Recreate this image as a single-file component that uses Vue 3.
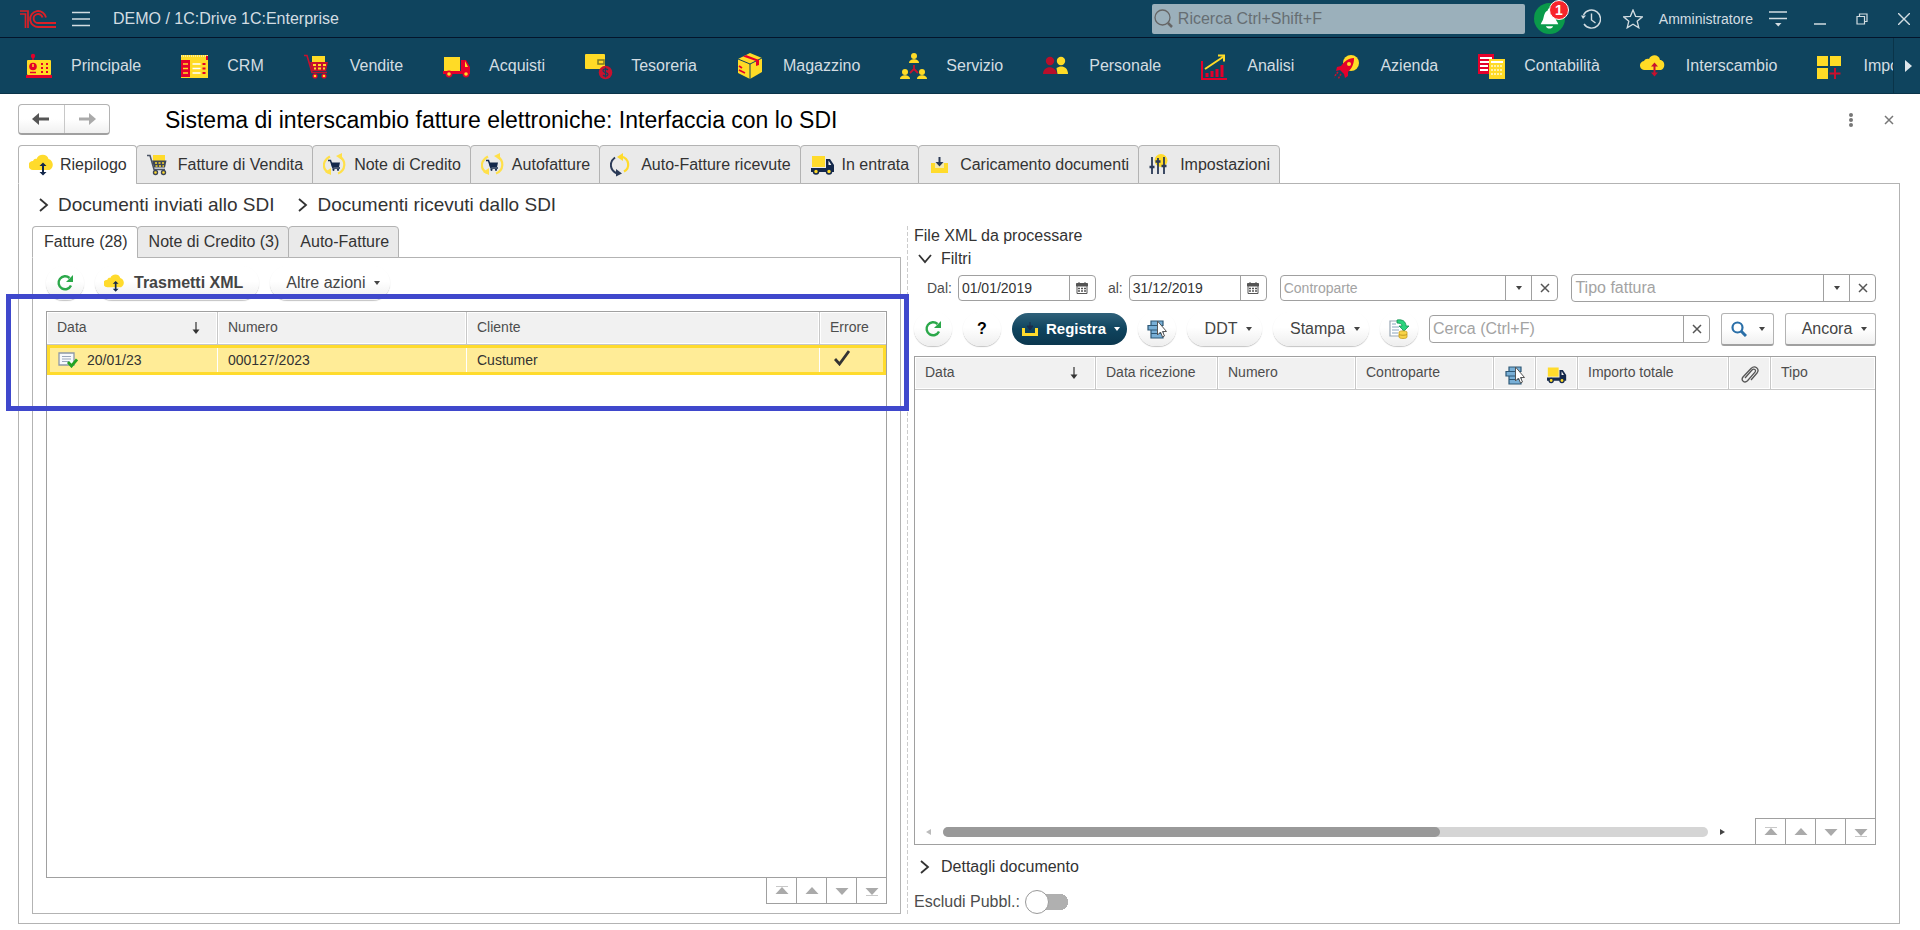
<script setup>
import { ref } from 'vue'

const sections = [
  { label: 'Principale', icon: 'radio' },
  { label: 'CRM', icon: 'crm' },
  { label: 'Vendite', icon: 'cart' },
  { label: 'Acquisti', icon: 'truck' },
  { label: 'Tesoreria', icon: 'wallet' },
  { label: 'Magazzino', icon: 'box' },
  { label: 'Servizio', icon: 'network' },
  { label: 'Personale', icon: 'people' },
  { label: 'Analisi', icon: 'chart' },
  { label: 'Azienda', icon: 'rocket' },
  { label: 'Contabilità', icon: 'ledger' },
  { label: 'Interscambio', icon: 'cloud' },
  { label: 'Impostazioni', icon: 'tiles' },
]

const tabs = [
  { label: 'Riepilogo', icon: 'tcloud' },
  { label: 'Fatture di Vendita', icon: 'tcart' },
  { label: 'Note di Credito', icon: 'tcredit' },
  { label: 'Autofatture', icon: 'tcredit' },
  { label: 'Auto-Fatture ricevute', icon: 'tcycle' },
  { label: 'In entrata', icon: 'ttruck' },
  { label: 'Caricamento documenti', icon: 'tload' },
  { label: 'Impostazioni', icon: 'tsliders' },
]
const activeTab = ref(0)

const docTabs = ['Fatture (28)', 'Note di Credito (3)', 'Auto-Fatture']
const activeDocTab = ref(0)

const invoices = [{ date: '20/01/23', number: '000127/2023', customer: 'Custumer' }]

const dateFrom = ref('01/01/2019')
const dateTo = ref('31/12/2019')
const counterparty = ref('')
const invoiceType = ref('')
const search = ref('')
const excludePublic = ref(false)

const pager = [
  { label: 'Prima riga', icon: 'first' },
  { label: 'Riga precedente', icon: 'prev' },
  { label: 'Riga successiva', icon: 'next' },
  { label: 'Ultima riga', icon: 'last' },
]
</script>

<template>
  <svg class="sprite" aria-hidden="true">
    <symbol id="radio" viewBox="0 0 28 28">
      <path d="M8 9V3" stroke="#e4002b" stroke-width="1.5" />
      <circle cx="8" cy="4" r="2.2" fill="#e4002b" />
      <rect x="2" y="8" width="24" height="15" rx="1" fill="#ffdb26" />
      <path d="M1 23h26v3H1z" fill="#e4002b" />
      <circle cx="8" cy="14.5" r="3.8" fill="#e4002b" />
      <path d="M8 12v3" stroke="#ffdb26" stroke-width="1.5" />
      <path d="M5 20.5h6" stroke="#e4002b" stroke-width="1.5" />
      <path d="M16 12h2m3 0h2m-7 4h2m3 0h2m-7 4h2m3 0h2" stroke="#e4002b" stroke-width="2" />
    </symbol>
    <symbol id="crm" viewBox="0 0 28 28">
      <rect x="0" y="3" width="27" height="23" fill="#ffdb26" />
      <path d="M0 4h27" stroke="#fff" stroke-width="1" stroke-dasharray="1 1" />
      <path d="M25 4h2v4h-2z" fill="#e4002b" />
      <rect x="0" y="8" width="9" height="17" fill="#e4002b" />
      <path d="M2 12h5M2 16.5h5M2 21h5" stroke="#ffdb26" stroke-width="1.5" />
      <path d="M11.5 12h8M11.5 16.5h8M11.5 21h8" stroke="#fff" stroke-width="1.5" />
      <path d="M21.5 12h3M21.5 16.5h3M21.5 21h3" stroke="#e4002b" stroke-width="2" />
    </symbol>
    <symbol id="cart" viewBox="0 0 28 28">
      <path d="M8 4h13v9H8z" fill="#ffdb26" />
      <path d="M0 3.500h3l5 17h15" fill="none" stroke="#c8102e" stroke-width="1.6" />
      <path d="M6 10h18l-2 9H8z" fill="#c8102e" />
      <path d="M9 13h3m2 0h3m2 0h3M10 16.5h2m2 0h3m2 0h2" stroke="#ffdb26" stroke-width="2" />
      <circle cx="11" cy="24" r="2.6" fill="#e4002b" /><circle cx="20" cy="24" r="2.6" fill="#e4002b" />
      <circle cx="11" cy="24" r="1.3" fill="#ffdb26" /><circle cx="20" cy="24" r="1.3" fill="#ffdb26" />
    </symbol>
    <symbol id="truck" viewBox="0 0 28 28">
      <rect x="1" y="5" width="16" height="14" fill="#ffdb26" />
      <path d="M0 19h18V8h5l4 7v7H0z" fill="#e4002b" />
      <path d="M22 9l3 6h-3z" fill="#ffdb26" />
      <circle cx="6" cy="22" r="3.4" fill="#e4002b" /><circle cx="23" cy="22" r="3.4" fill="#e4002b" />
      <circle cx="6" cy="22" r="1.8" fill="#ffdb26" /><circle cx="23" cy="22" r="1.8" fill="#ffdb26" />
    </symbol>
    <symbol id="wallet" viewBox="0 0 28 28">
      <rect x="0" y="2" width="20" height="15" rx="1" fill="#ffdb26" />
      <rect x="13" y="8" width="6" height="4" fill="#ffdb26" stroke="#7b7a25" stroke-width="1.5" />
      <circle cx="20.5" cy="20.5" r="6.8" fill="#c8102e" />
      <path d="M23 18c-2-2-5-1-5 .8 0 2.200 5 1.400 5 3.600 0 2-3.500 2.400-5 .6M20.500 15.500v10" fill="none" stroke="#0f445e" stroke-width="1.2" />
    </symbol>
    <symbol id="box" viewBox="0 0 28 28">
      <path d="M13 1l12 5v14l-12 7-12-6V7z" fill="#ffdb26" />
      <path d="M1 7l12 5 12-6M13 12v15" fill="none" stroke="#0f445e" stroke-width="1" />
      <path d="M6 4.500l3-1.500 13 5v5l-3 1v-5z" fill="#e4002b" />
      <path d="M2 14l3 2m-3 2l6 3" stroke="#e4002b" stroke-width="1.8" />
    </symbol>
    <symbol id="network" viewBox="0 0 28 28">
      <g fill="#ffdb26">
        <circle cx="14" cy="4" r="3" /><path d="M9 11c0-5 10-5 10 0z" />
        <circle cx="5" cy="20" r="3" /><path d="M0 27c0-5 10-5 10 0z" />
        <circle cx="22" cy="20" r="3" /><path d="M17 27c0-5 10-5 10 0z" />
      </g>
      <path d="M14 13v4l-4 4m4-4l4 4" fill="none" stroke="#c8102e" stroke-width="1.8" />
    </symbol>
    <symbol id="people" viewBox="0 0 28 28">
      <circle cx="7" cy="9" r="4.2" fill="#b80f2b" /><path d="M0 22c0-9 13-9 14 0z" fill="#b80f2b" />
      <circle cx="18" cy="9" r="4.2" fill="#ffdb26" /><path d="M14.500 22l-1-6c4-3 11.500-2 11.500 6z" fill="#ffdb26" />
    </symbol>
    <symbol id="chart" viewBox="0 0 28 28">
      <path d="M1 9v18h25" fill="none" stroke="#e4002b" stroke-width="2" />
      <path d="M6 25v-4m5 4v-6m5 6v-8m5 8V13" stroke="#e4002b" stroke-width="3" />
      <path d="M4 17L22 5M17 3.500h6v6" fill="none" stroke="#ffdb26" stroke-width="2" />
    </symbol>
    <symbol id="rocket" viewBox="0 0 28 28">
      <circle cx="17" cy="11" r="8" fill="#ffdb26" />
      <path d="M20 6c-6 0-10 4-13 8l-4 1-1 4 4-1 4 4 1 4 3-2v-4c4-4 6-8 6-14z" fill="#e4002b" />
      <circle cx="15" cy="12" r="2" fill="#ffdb26" />
      <path d="M4 20l-4 5m7-3l-3 5" stroke="#c8102e" stroke-width="1.5" stroke-dasharray="2 1" />
    </symbol>
    <symbol id="ledger" viewBox="0 0 28 28">
      <rect x="0" y="2" width="16" height="20" fill="#e4002b" />
      <path d="M2 6h12M2 10h10M2 14h8M2 18h8" stroke="#fff" stroke-width="2" />
      <rect x="11" y="7" width="16" height="20" fill="#ffdb26" />
      <path d="M13 10h12" stroke="#fff" stroke-width="2" />
      <path d="M13 14h12M13 18h12M13 22h12" stroke="#fff2a8" stroke-width="2" stroke-dasharray="2 1" />
    </symbol>
    <symbol id="cloud" viewBox="0 0 28 28">
      <path d="M5 18a4.500 4.500 0 0 1-1-9c1-2 3-2.500 5-2 2-5 10-5 11 1 5 0 6 8 1 10z" fill="#ffdb26" />
      <path d="M14.500 13v9" stroke="#c8102e" stroke-width="2" />
      <path d="M11 14.500l3.500-4 3.500 4zM11 20.500l3.500 4 3.500-4z" fill="#c8102e" />
    </symbol>
    <symbol id="tiles" viewBox="0 0 28 28">
      <path d="M0 4h11v10H0zM13 4h11v10H13zM0 16h11v11H0z" fill="#ffdb26" />
      <path d="M18 16v11m-5.500-5.500h11" stroke="#c8102e" stroke-width="2" />
    </symbol>

    <symbol id="tcloud" viewBox="0 0 24 24">
      <path d="M4 17a4.500 4.500 0 0 1 0-9c1-2 2-2.500 3.500-2C9 1 18 0 19.500 6c5 1 6 9 1 11z" fill="#ffdb2c" />
      <path d="M14 12v8" stroke="#14284b" stroke-width="2" />
      <path d="M10.500 13L14 9.500l3.500 3.500zM10.500 19l3.500 3.500 3.500-3.500z" fill="#14284b" />
    </symbol>
    <symbol id="tcart" viewBox="0 0 24 24">
      <path d="M6 2h12v7H6z" fill="#ffdb2c" />
      <path d="M0 2.500h3l4 14h11" fill="none" stroke="#4a5364" stroke-width="1.5" />
      <path d="M5 7.500h14.500L18 14.500H7z" fill="#3d4657" />
      <path d="M8 10h2m1.500 0h2m1.500 0h2M8.500 13h2m1.500 0h2m1.500 0h1.500" stroke="#ffdb2c" stroke-width="1.5" />
      <circle cx="8.5" cy="19.5" r="2" fill="#ffdb2c" stroke="#3d4657" stroke-width="1.4" />
      <circle cx="16.5" cy="19.5" r="2" fill="#ffdb2c" stroke="#3d4657" stroke-width="1.4" />
    </symbol>
    <symbol id="tcredit" viewBox="0 0 24 24">
      <path d="M7 3.500C-1 8-1 16 6 20M15 20.500c8-3 8-13 2-16.500" fill="none" stroke="#ffe04a" stroke-width="2.2" />
      <path d="M13 3l6-3v7zM2 19l6-4v7z" fill="#ffe04a" />
      <path d="M5 7.500h2.500L10 15h7" fill="none" stroke="#14284b" stroke-width="1.5" />
      <path d="M8 9.500h9l-1 4.500H9z" fill="#14284b" />
      <circle cx="10.5" cy="16.8" r="1.1" fill="#14284b" /><circle cx="15" cy="16.8" r="1.1" fill="#14284b" />
    </symbol>
    <symbol id="tcycle" viewBox="0 0 24 24">
      <path d="M5 4.500C-1 9-.5 17 7 20.500" fill="none" stroke="#2b3a57" stroke-width="2" />
      <path d="M6 16l6 4.500-6 3z" fill="#2b3a57" />
      <path d="M14 18.500c6-3 6-13-3-15" fill="none" stroke="#ffdb2c" stroke-width="2.2" />
      <path d="M7 4l6-4v8z" fill="#ffdb2c" />
    </symbol>
    <symbol id="ttruck" viewBox="0 0 24 24">
      <rect x="1" y="3" width="13" height="11" fill="#ffdb2c" />
      <path d="M0 15h15V6h4l4 6v7H0z" fill="#14284b" />
      <path d="M17.500 7.500l2.800 4.500h-2.800z" fill="#f5f5f5" />
      <circle cx="5" cy="18.5" r="2.5" fill="#ffdb2c" stroke="#14284b" stroke-width="1.5" />
      <circle cx="18" cy="18.5" r="2.5" fill="#ffdb2c" stroke="#14284b" stroke-width="1.5" />
    </symbol>
    <symbol id="tload" viewBox="0 0 24 24">
      <path d="M2 10h4v5h9v-5h4v10H2z" fill="#ffdb2c" />
      <path d="M6 10h9v5H6z" fill="#f2e9b0" />
      <path d="M10.500 4v6" stroke="#2b3a57" stroke-width="2" />
      <path d="M6.500 9l4 4.500L14.500 9z" fill="#2b3a57" />
    </symbol>
    <symbol id="tsliders" viewBox="0 0 24 24">
      <circle cx="12" cy="7.5" r="6.5" fill="#ffdb2c" />
      <path d="M3 4v17M9 5v16M15 4v17" stroke="#2b3a57" stroke-width="1.8" />
      <path d="M.5 14h5M6.500 8.500h5M12.500 13h5" stroke="#2b3a57" stroke-width="2.600" />
    </symbol>

    <symbol id="refresh" viewBox="0 0 18 18">
      <path d="M15 11.500A6.500 6.500 0 1 1 13.500 4" fill="none" stroke="#2ba84a" stroke-width="2.4" />
      <path d="M17 1v7H10z" fill="#2ba84a" />
    </symbol>
    <symbol id="pick" viewBox="0 0 20 20">
      <path d="M4 2h12v4.500H4zM1 6.500h12V11H1zM4 11h12v3.500H4zM4 14.500h12V19H4z" fill="#78afd6" stroke="#2d5876" stroke-width="1.2" />
      <path d="M10.500 2v14l3-3 2 5 2-1-2-4.500h4z" fill="#fff" stroke="#555" stroke-width="1" />
    </symbol>
    <symbol id="export" viewBox="0 0 20 20">
      <path d="M1 2h13v15H1z" fill="#fff" stroke="#9aa7b5" stroke-width="1.2" />
      <path d="M3 5h4M3 8h7M3 11h7M3 14h6" stroke="#8aa4bd" stroke-width="1.2" />
      <path d="M8 1c6-1 9 2 9 6h3l-5 5-5-5h3c0-2-2-3-5-3z" fill="#2bd47d" stroke="#149152" stroke-width=".8" />
      <path d="M10 13c0-1.500 8-1.500 8 0v5c0 2-8 2-8 0z" fill="#f8d348" stroke="#c49a20" stroke-width=".8" />
      <path d="M10 15.500c2 1 6 1 8 0" fill="none" stroke="#c49a20" />
    </symbol>
    <symbol id="calendar" viewBox="0 0 12 12">
      <path d="M1 2h10v9.500H1z" fill="#fff" stroke="#555" />
      <path d="M.5 1.500h11V4H.5zM3 0v2m6-2v2" fill="#555" stroke="#555" />
      <path d="M2 6.500h8M2 9h8" stroke="#555" stroke-width="1.5" stroke-dasharray="2 1" />
    </symbol>
    <symbol id="cross" viewBox="0 0 10 10">
      <path d="M1 1l8 8M9 1L1 9" stroke="currentColor" stroke-width="1.5" />
    </symbol>
    <symbol id="caret" viewBox="0 0 6 4"><path d="M0 0h6L3 4z" fill="currentColor" /></symbol>
    <symbol id="chevron" viewBox="0 0 10 16">
      <path d="M1 2l7 6-7 6" fill="none" stroke="#333" stroke-width="1.8" />
    </symbol>
    <symbol id="sort" viewBox="0 0 8 12">
      <path d="M4 0v10" stroke="#333" stroke-width="1.2" /><path d="M.5 7.500h7L4 12z" fill="#333" />
    </symbol>
    <symbol id="first" viewBox="0 0 14 10"><path d="M1 .5h12" stroke="#c8c8c8" /><path d="M7 1l6.500 7H.5z" fill="#aaa" /></symbol>
    <symbol id="prev" viewBox="0 0 14 10"><path d="M7 1l6.500 7H.5z" fill="#aaa" /></symbol>
    <symbol id="next" viewBox="0 0 14 10"><path d="M7 9L.5 2h13z" fill="#aaa" /></symbol>
    <symbol id="last" viewBox="0 0 14 10"><path d="M1 9.500h12" stroke="#c8c8c8" /><path d="M7 9L.5 2h13z" fill="#aaa" /></symbol>
  </svg>

  <div class="app">
    <header class="topbar">
      <svg class="logo" viewBox="0 0 38 20" fill="none" stroke="#dd1f26" stroke-width="1.9" role="img" aria-label="1C">
        <path d="M1 5h5.500V19M1 2h8v17" stroke-width="1.700" />
        <path d="M27 8.500A8 8 0 1 0 20 18h17M23.500 8.500a4.500 4.500 0 1 0-4 5.500H37" />
      </svg>
      <button class="bare menu" aria-label="Menu"><svg viewBox="0 0 18 16"><path d="M0 1.500h18M0 8h18M0 14.500h18" stroke="#d3dde2" stroke-width="1.3" /></svg></button>
      <span class="product">DEMO / 1C:Drive 1C:Enterprise</span>
      <label class="global-search">
        <svg viewBox="0 0 20 20"><circle cx="8.5" cy="8.5" r="7.5" fill="none" stroke="#666" stroke-width="1.3" /><path d="M14 14l4 4" stroke="#666" stroke-width="2.5" /></svg>
        <input type="text" placeholder="Ricerca Ctrl+Shift+F" aria-label="Ricerca">
      </label>
      <button class="bell" aria-label="Notifiche">
        <svg viewBox="0 0 30 30"><circle cx="15" cy="15" r="15" fill="#0a9a4a" /><path d="M15 5c1.500 0 1.500 2 2 2.500 4 1.500 3 8 5.500 11l1 2h-17l1-2c2.500-3 1.500-9.500 5.500-11 .5-.5.500-2.500 2-2.500z" fill="#fff" /><path d="M11.500 22.500h7c-1 3-6 3-7 0z" fill="#fff" /></svg>
        <span class="badge">1</span>
      </button>
      <button class="bare history" aria-label="Cronologia"><svg viewBox="0 0 20 20" fill="none" stroke="#d3dde2" stroke-width="1.4"><path d="M2.500 6A9 9 0 1 1 3 15" /><path d="M10.500 4.500V11l4 3" /><path d="M0 6.500h5L2 10z" fill="#d3dde2" stroke="none" /></svg></button>
      <button class="bare star" aria-label="Preferiti"><svg viewBox="0 0 20 20" fill="none" stroke="#d3dde2" stroke-width="1.3"><path d="M10 1l2.600 6.300 6.800.5-5.200 4.400 1.600 6.600L10 15.300l-5.800 3.500 1.600-6.600L.6 7.800l6.800-.5z" /></svg></button>
      <a class="user" href="#">Amministratore</a>
      <button class="bare service" aria-label="Servizio e impostazioni"><svg viewBox="0 0 18 16"><path d="M0 1h18M0 7.500h18" stroke="#d3dde2" stroke-width="1.4" /><path d="M6 12h6.500l-3.200 3.500z" fill="#d3dde2" /></svg></button>
      <div class="window-buttons">
        <button class="bare" aria-label="Riduci"><svg viewBox="0 0 12 12"><path d="M0 11h12" stroke="#d3dde2" stroke-width="1.5" /></svg></button>
        <button class="bare" aria-label="Ripristina"><svg viewBox="0 0 12 12" fill="none" stroke="#d3dde2" stroke-width="1.2"><path d="M1 3.500h7.500V11H1zM3.500 3.500V1H11v7.500H8.500" /></svg></button>
        <button class="bare" aria-label="Chiudi"><svg viewBox="0 0 12 12"><path d="M0 0l12 12M12 0L0 12" stroke="#d3dde2" stroke-width="1.4" /></svg></button>
      </div>
    </header>

    <nav class="sections" aria-label="Sezioni">
      <div class="section-list">
        <a v-for="s in sections" :key="s.label" href="#"><svg><use :href="'#' + s.icon" /></svg>{{ s.label }}</a>
      </div>
      <button class="bare more" aria-label="Altre sezioni"><svg viewBox="0 0 7 12"><path d="M0 0l7 6-7 6z" fill="#dfe6ea" /></svg></button>
    </nav>

    <main>
      <div class="form-head">
        <div class="history-nav">
          <button aria-label="Indietro"><svg viewBox="0 0 18 12"><path d="M17 6H5" stroke="#555" stroke-width="3" /><path d="M0 6l7-6v12z" fill="#555" /></svg></button>
          <button aria-label="Avanti"><svg viewBox="0 0 18 12"><path d="M1 6h12" stroke="#aaa" stroke-width="3" /><path d="M18 6l-7-6v12z" fill="#aaa" /></svg></button>
        </div>
        <h1>Sistema di interscambio fatture elettroniche: Interfaccia con lo SDI</h1>
        <button class="bare dots" aria-label="Altro"><svg viewBox="0 0 4 14" fill="#777"><circle cx="2" cy="2" r="2" /><circle cx="2" cy="7" r="2" /><circle cx="2" cy="12" r="2" /></svg></button>
        <button class="bare close" aria-label="Chiudi modulo"><svg><use href="#cross" /></svg></button>
      </div>

      <div class="tabs" role="tablist">
        <button v-for="(t, i) in tabs" :key="t.label" role="tab" :aria-selected="i === activeTab" :class="{ active: i === activeTab }" @click="activeTab = i">
          <svg><use :href="'#' + t.icon" /></svg>{{ t.label }}
        </button>
      </div>

      <section class="page">
        <div class="groups">
          <button class="bare"><svg class="chev"><use href="#chevron" /></svg>Documenti inviati allo SDI</button>
          <button class="bare"><svg class="chev"><use href="#chevron" /></svg>Documenti ricevuti dallo SDI</button>
        </div>

        <div class="split">
          <section class="left">
            <div class="tabs small" role="tablist">
              <button v-for="(t, i) in docTabs" :key="t" role="tab" :aria-selected="i === activeDocTab" :class="{ active: i === activeDocTab }" @click="activeDocTab = i">{{ t }}</button>
            </div>
            <div class="doc-page">
              <div class="toolbar doc-tools">
                <button class="pill round" aria-label="Aggiorna"><svg class="i18"><use href="#refresh" /></svg></button>
                <button class="pill send"><svg class="i20"><use href="#tcloud" /></svg>Trasmetti XML</button>
                <button class="pill other">Altre azioni<svg class="caret"><use href="#caret" /></svg></button>
              </div>
              <div class="grid">
                <table>
                  <colgroup><col class="w171"><col class="w249"><col><col class="w66"></colgroup>
                  <thead><tr><th class="sorted">Data<svg><use href="#sort" /></svg></th><th>Numero</th><th>Cliente</th><th>Errore</th></tr></thead>
                  <tbody>
                    <tr v-for="row in invoices" :key="row.number" class="selected">
                      <td><span class="doc"><svg viewBox="0 0 20 16"><path d="M1 1h15v12H1z" fill="#f7f9fc" stroke="#8d98a8" stroke-width="1.3" /><path d="M4 4.500h9M4 7h9M4 9.500h7" stroke="#9aa7bb" /><path d="M10 10l3.500 4L19 7.500" fill="none" stroke="#23a323" stroke-width="2.8" /></svg>{{ row.date }}</span></td>
                      <td>{{ row.number }}</td>
                      <td>{{ row.customer }}</td>
                      <td class="flag"><svg viewBox="0 0 16 16" role="img" aria-label="Errore"><path d="M1 9l4.500 5L15 1" fill="none" stroke="#333" stroke-width="2.8" /></svg></td>
                    </tr>
                  </tbody>
                </table>
              </div>
              <div class="pager below"><button v-for="p in pager" :key="p.icon" :aria-label="p.label"><svg><use :href="'#' + p.icon" /></svg></button></div>
            </div>
            <div class="highlight" aria-hidden="true"></div>
          </section>

          <div class="divider"></div>

          <section class="right">
            <h2>File XML da processare</h2>
            <button class="bare fold filters-title"><svg class="chev down"><use href="#chevron" /></svg>Filtri</button>
            <div class="filters">
              <label for="from">Dal:</label>
              <div class="field date"><input id="from" v-model="dateFrom" type="text"><button aria-label="Scegli data iniziale"><svg class="cal"><use href="#calendar" /></svg></button></div>
              <label for="to" class="to">al:</label>
              <div class="field date"><input id="to" v-model="dateTo" type="text"><button aria-label="Scegli data finale"><svg class="cal"><use href="#calendar" /></svg></button></div>
              <div class="field party"><input v-model="counterparty" type="text" placeholder="Controparte" aria-label="Controparte"><button aria-label="Elenco controparti"><svg class="caret"><use href="#caret" /></svg></button><button aria-label="Cancella controparte" @click="counterparty = ''"><svg class="x"><use href="#cross" /></svg></button></div>
              <div class="field big type"><input v-model="invoiceType" type="text" placeholder="Tipo fattura" aria-label="Tipo fattura"><button aria-label="Elenco tipi fattura"><svg class="caret"><use href="#caret" /></svg></button><button aria-label="Cancella tipo fattura" @click="invoiceType = ''"><svg class="x"><use href="#cross" /></svg></button></div>
            </div>
            <div class="toolbar">
              <button class="pill round" aria-label="Aggiorna elenco"><svg class="i18"><use href="#refresh" /></svg></button>
              <button class="pill round help">?</button>
              <button class="register"><svg viewBox="0 0 16 14"><path d="M1.500 6v6.500h13V6" fill="none" stroke="#ffdb2c" stroke-width="3" /><path d="M8 0v4M5 4h6L8 8z" fill="#1a2c4a" stroke="#1a2c4a" /></svg>Registra<svg class="caret"><use href="#caret" /></svg></button>
              <button class="pill round" aria-label="Seleziona"><svg class="i20"><use href="#pick" /></svg></button>
              <button class="pill ddt">DDT<svg class="caret"><use href="#caret" /></svg></button>
              <button class="pill print">Stampa<svg class="caret"><use href="#caret" /></svg></button>
              <button class="pill round" aria-label="Esporta"><svg class="i20"><use href="#export" /></svg></button>
              <div class="field big find"><input v-model="search" type="text" placeholder="Cerca (Ctrl+F)" aria-label="Cerca"><button aria-label="Cancella ricerca" @click="search = ''"><svg class="x"><use href="#cross" /></svg></button></div>
              <button class="raised lens" aria-label="Trova"><svg viewBox="0 0 16 16"><circle cx="6.5" cy="6.5" r="5" fill="none" stroke="#2a6fa8" stroke-width="2.2" /><path d="M10 10l5 5" stroke="#2a6fa8" stroke-width="3" /></svg><svg class="caret"><use href="#caret" /></svg></button>
              <button class="raised again">Ancora<svg class="caret"><use href="#caret" /></svg></button>
            </div>
            <div class="grid right-grid">
              <table>
                <colgroup><col><col class="w122"><col class="w138"><col class="w138"><col class="w42"><col class="w42"><col class="w151"><col class="w42"><col class="w104"></colgroup>
                <thead><tr>
                  <th class="sorted">Data<svg><use href="#sort" /></svg></th><th>Data ricezione</th><th>Numero</th><th>Controparte</th>
                  <th class="ico"><svg class="i20"><use href="#pick" /></svg></th>
                  <th class="ico"><svg class="i20"><use href="#ttruck" /></svg></th>
                  <th>Importo totale</th>
                  <th class="ico"><svg class="i20" viewBox="0 0 20 20"><path d="M5 13l7-8c2-2 4.500 0 3 2.200l-7.500 8.500c-3 3-7-.5-4.500-3.700L11 3.500c4-4 9 .5 6 4.500l-6 7" fill="none" stroke="#555" stroke-width="1.3" /></svg></th>
                  <th>Tipo</th>
                </tr></thead>
                <tbody></tbody>
              </table>
              <div class="scrollrow">
                <svg class="arrow" viewBox="0 0 5 6"><path d="M5 0v6L0 3z" fill="#bbb" /></svg>
                <div class="track"><div class="thumb"></div></div>
                <svg class="arrow" viewBox="0 0 5 6"><path d="M0 0v6l5-3z" fill="#444" /></svg>
                <div class="pager"><button v-for="p in pager" :key="p.icon" :aria-label="p.label"><svg><use :href="'#' + p.icon" /></svg></button></div>
              </div>
            </div>
            <button class="bare fold details"><svg class="chev"><use href="#chevron" /></svg>Dettagli documento</button>
            <label class="switch">Escludi Pubbl.:<input v-model="excludePublic" type="checkbox"></label>
          </section>
        </div>
      </section>
    </main>
  </div>
</template>

<style>
body { background: #fff; }
</style>

<style scoped>
.sprite { display: none; }
.app {
  box-sizing: border-box;
  display: flex;
  flex-direction: column;
  min-height: 100vh;
  overflow: hidden;
  font: 16px/20px "Liberation Sans", Arial, sans-serif;
  color: #333;
}
.app *, .app *::before { box-sizing: border-box; }
svg { display: block; flex: none; }
button, input { font: inherit; color: inherit; }
button { padding: 0; cursor: pointer; white-space: nowrap; }
.bare { border: 0; background: none; }
a { color: inherit; text-decoration: none; }

.topbar {
  display: flex;
  align-items: center;
  height: 38px;
  padding: 0 10px 0 19px;
  background: #0f445e;
  border-bottom: 1px solid #03152b;
  color: #d3dde2;
}
.logo { width: 38px; height: 20px; }
.menu { margin: 0 23px 0 15px; }
.menu svg { width: 18px; height: 16px; }
.product { flex: 1; }
.global-search {
  display: flex;
  align-items: center;
  width: 373px;
  height: 30px;
  padding-left: 2px;
  gap: 4px;
  border-radius: 2px;
  background: #9bb0bb;
}
.global-search svg { width: 20px; height: 20px; }
.global-search input { flex: 1; min-width: 0; padding: 0; border: 0; background: none; outline: 0; }
.global-search input::placeholder { color: #666e73; opacity: 1; }
.bell { position: relative; width: 31px; height: 31px; margin-left: 9px; border: 0; background: none; }
.bell svg { width: 31px; height: 31px; }
.badge {
  position: absolute;
  top: -3px;
  right: -4px;
  width: 20px;
  height: 20px;
  border: 1px solid #fff;
  border-radius: 50%;
  background: #f8252b;
  color: #fff;
  font-size: 14px;
  font-weight: bold;
  line-height: 18px;
}
.history { margin-left: 16px; }
.star { margin-left: 22px; }
.history svg, .star svg { width: 20px; height: 20px; }
.user { margin-left: 16px; font-size: 14px; }
.service { margin-left: 16px; }
.service svg { width: 18px; height: 16px; }
.window-buttons { display: flex; gap: 30px; margin-left: 27px; }
.window-buttons svg { width: 12px; height: 12px; }

.sections {
  display: flex;
  height: 56px;
  background: #0f445e;
  border-bottom: 1px solid #0a3449;
  color: #d3dde2;
}
.section-list { display: flex; flex: 1; gap: 40px; min-width: 0; overflow: hidden; padding-left: 25px; }
.section-list a { display: flex; flex: none; align-items: center; gap: 18px; }
.section-list svg { width: 28px; height: 28px; }
.more { width: 27px; padding-left: 11px; border-left: 1px solid #0a3449; }
.more svg { width: 7px; height: 12px; }

main { display: flex; flex: 1; flex-direction: column; padding: 10px 20px 6px 18px; }
.form-head { display: flex; align-items: center; height: 31px; margin-bottom: 10px; }
.history-nav { display: flex; width: 92px; height: 31px; border: 1px solid #b3b3b3; border-bottom: 2px solid #a0a0a0; border-radius: 4px; background: linear-gradient(#fff 50%, #f0f0f0); }
.history-nav button { display: grid; flex: 1; place-items: center; border: 0; background: none; }
.history-nav button + button { border-left: 1px solid #c8c8c8; }
.history-nav svg { width: 18px; height: 12px; }
h1 { flex: 1; margin: 0 0 0 55px; color: #000; font-size: 23px; font-weight: normal; line-height: 24px; }
.dots svg { width: 4px; height: 14px; }
.close { margin: 0 6px 0 31px; color: #777; }
.close svg { width: 10px; height: 10px; }

.tabs { display: flex; position: relative; z-index: 1; margin-bottom: -1px; }
.tabs button {
  display: flex;
  align-items: center;
  gap: 7px;
  height: 39px;
  margin-right: -1px;
  padding: 0 9px 0 10px;
  border: 1px solid #b3b3b3;
  border-radius: 4px 4px 0 0;
  background: #eaeaea;
}
.tabs button.active { background: #fff; border-bottom-color: #fff; }
.tabs button svg { width: 24px; height: 24px; }
.tabs.small button { height: 32px; padding: 0 9px 0 11px; }

.page {
  display: flex;
  flex: 1;
  flex-direction: column;
  padding: 10px 23px 9px 13px;
  border: 1px solid #b3b3b3;
}
.groups { display: flex; gap: 24px; height: 22px; margin: 0 0 10px 7px; font-size: 19px; }
.groups button { display: flex; align-items: center; gap: 9px; }
.chev { width: 10px; height: 16px; }
.down { transform: rotate(90deg); }

.split { display: grid; flex: 1; grid-template-columns: minmax(0, 869fr) 13px minmax(0, 962fr); }
.left { position: relative; display: flex; flex-direction: column; }
.doc-page { display: flex; flex: 1; flex-direction: column; padding: 8px 13px 9px; border: 1px solid #b3b3b3; }
.highlight { position: absolute; top: 68px; right: -8px; left: -26px; height: 117px; border: 5px solid #3f48cc; pointer-events: none; }
.divider { width: 1px; margin-left: 6px; background: repeating-linear-gradient(#ccc 0 4px, transparent 4px 6px); }
.right { display: flex; flex-direction: column; min-width: 0; }

.toolbar { display: flex; align-items: center; gap: 11px; }
.pill {
  display: flex;
  align-items: center;
  justify-content: center;
  height: 34px;
  border: 0;
  border-radius: 17px;
  background: linear-gradient(#fff 45%, #eee);
  box-shadow: 0 1px 1px #c4c4c4;
  color: #444;
}
.round { width: 38px; }
.i18 { width: 18px; height: 18px; }
.i20 { width: 20px; height: 20px; }
.caret { width: 6px; height: 4px; color: #444; }
.doc-tools { margin-bottom: 11px; }
.send { padding: 0 16px 0 9px; gap: 10px; font-weight: bold; }
.other { padding: 0 10px 0 16px; gap: 8px; }
.help { color: #000; font-weight: bold; }
.register {
  display: flex;
  align-items: center;
  height: 32px;
  padding: 0 7px 0 10px;
  border: 0;
  border-radius: 16px;
  background: linear-gradient(#2f617a, #0f445e 50%, #0b374e);
  color: #fff;
  font-size: 15px;
  font-weight: bold;
  gap: 8px;
}
.register svg { width: 16px; height: 14px; }
.register .caret { width: 6px; height: 4px; color: #fff; }
.ddt { width: 75px; padding-left: 8px; gap: 9px; }
.print { width: 96px; padding-left: 8px; gap: 9px; }

.grid { display: flex; flex: 1; flex-direction: column; border: 1px solid #a0a0a0; }
table { width: 100%; border-collapse: separate; border-spacing: 0; table-layout: fixed; font-size: 14px; }
.w171 { width: 171px; } .w249 { width: 249px; } .w66 { width: 66px; }
.w122 { width: 122px; } .w138 { width: 138px; } .w42 { width: 42px; }
.w151 { width: 151px; } .w104 { width: 104px; }
th {
  height: 33px;
  padding: 0 8px 2px 10px;
  border-right: 1px solid #c8c8c8;
  border-bottom: 1px solid #c8c8c8;
  background: #f1f1f1;
  box-shadow: inset 0 0 0 1px #fff;
  color: #4d4d4d;
  font-weight: normal;
  text-align: left;
  white-space: nowrap;
}
th:last-child { border-right: 0; }
th svg { display: inline-block; vertical-align: middle; }
.sorted svg { float: right; width: 8px; height: 12px; margin: 5px 9px 0 0; }
.ico { padding: 2px 0 0; text-align: center; }
td {
  height: 30px;
  padding: 0 8px 1px 10px;
  border-top: 3px solid #ffdb2c;
  border-bottom: 3px solid #ffdb2c;
  background: #ffec97;
  box-shadow: inset -1px 0 0 #fff;
}
td:first-child { border-left: 3px solid #ffdb2c; padding-left: 8px; }
td:last-child { border-right: 3px solid #ffdb2c; box-shadow: none; }
.doc { display: flex; align-items: center; gap: 9px; }
.doc svg { width: 20px; height: 16px; }
.flag svg { width: 16px; height: 16px; margin: 0 0 4px 4px; }

.pager { display: flex; width: 121px; height: 27px; border: 1px solid #a0a0a0; }
.pager button { display: grid; flex: 1; place-items: center; border: 0; background: none; }
.pager button + button { border-left: 1px solid #a0a0a0; }
.pager svg { width: 14px; height: 10px; }
.below { align-self: flex-end; margin-top: -1px; }

h2 { margin: 0; font-size: 16px; font-weight: normal; }
.right h2 { height: 23px; }
.fold { display: flex; align-items: center; gap: 11px; align-self: flex-start; padding-left: 6px; }
.filters-title { height: 20px; margin-bottom: 5px; }
.filters { display: flex; align-items: center; height: 28px; margin-bottom: 10px; padding-left: 13px; font-size: 14px; }
.filters label { color: #4d4d4d; }
.field { display: flex; height: 26px; border: 1px solid #a0a0a0; border-radius: 4px; background: #fff; }
.field input { flex: 1; min-width: 0; padding: 0 3px; border: 0; background: none; outline: 0; }
.field input::placeholder { color: #a3a3a3; opacity: 1; }
.field button { display: grid; width: 26px; place-items: center; border: 0; border-left: 1px solid #a0a0a0; background: none; color: #555; }
.date { width: 138px; margin-left: 6px; }
.filters .to { margin-left: 12px; }
.cal { width: 12px; height: 12px; }
.x { width: 10px; height: 10px; }
.party { flex: 278; margin-left: 13px; }
.type { flex: 304; margin-left: 13px; }
.big { height: 28px; font-size: 16px; }
.find { flex: 1; }
.raised {
  display: flex;
  align-items: center;
  justify-content: center;
  height: 33px;
  border: 1px solid #b3b3b3;
  border-bottom: 2px solid #a0a0a0;
  border-radius: 3px;
  background: linear-gradient(#fff 50%, #f0f0f0);
  color: #444;
}
.lens { width: 53px; gap: 12px; }
.lens svg:first-child { width: 16px; height: 16px; }
.again { width: 91px; padding-left: 8px; gap: 9px; }
.right-grid { margin-top: 10px; }
.scrollrow { display: flex; align-items: center; margin: auto -1px -1px 11px; }
.arrow { width: 5px; height: 6px; }
.track { flex: 1; height: 10px; margin: 0 12px; border-radius: 5px; background: #d5d5d5; }
.thumb { width: 65%; height: 10px; border-radius: 5px; background: #999; }
.scrollrow .pager { margin-left: 30px; }
.details { height: 22px; margin: 11px 0 12px; }
.switch { display: flex; align-items: center; gap: 5px; height: 24px; color: #4d4d4d; }
.switch input {
  position: relative;
  width: 43px;
  height: 24px;
  margin: 0;
  appearance: none;
  background: linear-gradient(#b0b0b0, #b0b0b0) right 8px center / 22px 16px no-repeat,
    radial-gradient(circle at center, #b0b0b0 8px, transparent 8px) right center / 16px 16px no-repeat;
}
.switch input::before {
  content: "";
  position: absolute;
  top: 0;
  left: 0;
  width: 24px;
  height: 24px;
  border: 1px solid #999;
  border-radius: 50%;
  background: #fff;
}
.switch input:checked::before { left: auto; right: 0; }
</style>
